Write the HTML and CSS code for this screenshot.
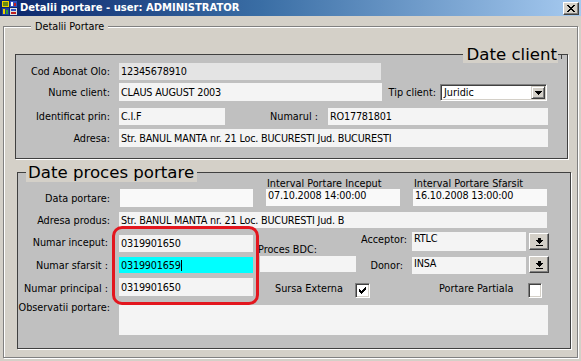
FILE: index.html
```html
<!DOCTYPE html>
<html>
<head>
<meta charset="utf-8">
<title>Detalii portare</title>
<link rel="stylesheet" href="styles.css">
</head>
<body>
<div class="titlebar">
  <svg class="appicon" width="15" height="14" viewBox="0 0 15 14" shape-rendering="crispEdges">
    <rect x="0" y="0" width="7" height="6" fill="#f0d000"/>
    <rect x="1" y="1" width="5" height="4" fill="#6a8a10"/>
    <rect x="8" y="0" width="7" height="6" fill="#3050c0"/>
    <rect x="9" y="1" width="2" height="4" fill="#ffffff"/>
    <rect x="12" y="2" width="2" height="3" fill="#c02020"/>
    <rect x="0" y="7" width="7" height="7" fill="#2040a0"/>
    <rect x="1" y="8" width="2" height="5" fill="#f0d000"/>
    <rect x="4" y="9" width="2" height="4" fill="#30a030"/>
    <rect x="8" y="7" width="7" height="7" fill="#e0e0e0"/>
    <rect x="9" y="8" width="5" height="2" fill="#3050c0"/>
    <rect x="9" y="11" width="5" height="2" fill="#c02020"/>
  </svg>
  <span class="title">Detalii portare - user: ADMINISTRATOR</span>
  <div class="closebtn">
    <svg width="8" height="7" viewBox="0 0 8 7" shape-rendering="crispEdges"><path d="M0 0h2v1H0z M6 0h2v1H6z M1 1h2v1H1z M5 1h2v1H5z M2 2h4v1H2z M3 3h2v1H3z M2 4h4v1H2z M1 5h2v1H1z M5 5h2v1H5z M0 6h2v1H0z M6 6h2v1H6z" fill="#000"/></svg>
  </div>
</div>

<div class="frame">
  <div class="frame-legend">Detalii Portare</div>

  <section class="panel panel-client">
    <div class="head-right">
      <div class="heading">Date client</div>
      <span class="tick"></span>
    </div>

    <div class="row">
      <div class="lbl c-lbl">Cod Abonat Olo:</div>
      <div class="fld fld-dis w262 h17">12345678910</div>
    </div>
    <div class="row mt3">
      <div class="lbl c-lbl">Nume client:</div>
      <div class="fld w263 h18">CLAUS AUGUST 2003</div>
      <div class="lbl tip-lbl">Tip client:</div>
      <div class="select">
        <span class="select-val">Juridic</span>
        <span class="select-btn">
          <svg width="7" height="4" viewBox="0 0 7 4" shape-rendering="crispEdges"><path d="M0 0h7v1H0z M1 1h5v1H1z M2 2h3v1H2z M3 3h1v1H3z" fill="#000"/></svg>
        </span>
      </div>
    </div>
    <div class="row mt7">
      <div class="lbl c-lbl">Identificat prin:</div>
      <div class="fld w106 h17">C.I.F</div>
      <div class="lbl nr-lbl">Numarul :</div>
      <div class="fld w220 h17">RO17781801</div>
    </div>
    <div class="row mt4">
      <div class="lbl c-lbl">Adresa:</div>
      <div class="fld w429 h18">Str. BANUL MANTA nr. 21 Loc. BUCURESTI Jud. BUCURESTI</div>
    </div>
  </section>

  <section class="panel panel-proc">
    <div class="heading heading-left">Date proces portare</div>

    <div class="rowA">
      <div class="row mt11">
        <div class="lbl p-lbl mr10">Data portare:</div>
        <div class="fld fld-white w133 h18"></div>
      </div>
      <div class="iv">
        <div class="iv-lbl">Interval Portare Inceput</div>
        <div class="fld fld-white fld-top h17">07.10.2008 14:00:00</div>
      </div>
      <div class="iv">
        <div class="iv-lbl">Interval Portare Sfarsit</div>
        <div class="fld fld-white fld-top h17">16.10.2008 13:00:00</div>
      </div>
    </div>

    <div class="row mt5">
      <div class="lbl p-lbl mr9">Adresa produs:</div>
      <div class="fld w428 h16">Str. BANUL MANTA nr. 21 Loc. BUCURESTI Jud. B</div>
    </div>

    <div class="gridC">
      <div class="lbl n-lbl">Numar inceput:</div>
      <div class="fld h17 mt3">0319901650</div>
      <div class="bdc-lbl">Proces BDC:</div>
      <div class="side">
        <div class="lbl side-lbl">Acceptor:</div>
        <div class="fld fld-top w114 h19">RTLC</div>
        <div class="btn btn-a"><svg width="7" height="8" viewBox="0 0 7 8" shape-rendering="crispEdges"><path d="M2 0h3v2H2z M0 2h7v1H0z M1 3h5v1H1z M2 4h3v1H2z M3 5h1v1H3z M0 7h7v1H0z" fill="#000"/></svg></div>
      </div>

      <div class="lbl n-lbl">Numar sfarsit :</div>
      <div class="fld fld-cyan h16 mt1"><span class="caret">0319901659</span></div>
      <div class="fld bdc-fld h16"></div>
      <div class="side">
        <div class="lbl side-lbl donor">Donor:</div>
        <div class="fld fld-top w114 h17 mt1">INSA</div>
        <div class="btn btn-d"><svg width="7" height="8" viewBox="0 0 7 8" shape-rendering="crispEdges"><path d="M2 0h3v2H2z M0 2h7v1H0z M1 3h5v1H1z M2 4h3v1H2z M3 5h1v1H3z M0 7h7v1H0z" fill="#000"/></svg></div>
      </div>

      <div class="lbl n-lbl">Numar principal :</div>
      <div class="fld h18">0319901650</div>
      <div class="checks">
        <span class="chk-lbl sursa">Sursa Externa</span>
        <span class="chk"><svg width="7" height="7" viewBox="0 0 7 7" shape-rendering="crispEdges"><path d="M6 0h1v1H6z M5 1h2v1H5z M0 2h1v1H0z M4 2h3v1H4z M0 3h2v1H0z M3 3h3v1H3z M0 4h5v1H0z M1 5h3v1H1z M2 6h1v1H2z" fill="#000"/></svg></span>
        <span class="chk-lbl partiala">Portare Partiala</span>
        <span class="chk chk-small"></span>
      </div>
    </div>

    <div class="row mt7">
      <div class="lbl p-lbl mr9 lbl-top">Observatii portare:</div>
      <div class="fld w429 h30"></div>
    </div>

    <div class="highlight"></div>
  </section>
</div>
</body>
</html>
```

FILE: styles.css
```css
* { box-sizing: border-box; }
html, body { margin: 0; padding: 0; }
body {
  width: 581px;
  height: 361px;
  overflow: hidden;
  background: #d4d0c8;
  font-family: "DejaVu Sans", Verdana, sans-serif;
  font-size: 9.7px;
  color: #000;
}

/* Title bar */
.titlebar {
  height: 16px;
  display: flex;
  align-items: flex-start;
  background: linear-gradient(to right, #0a246a 0%, #3a6ea5 45%, #a6caf0 100%);
}
.appicon { flex: none; margin: 1px 0 0 2px; }
.title {
  margin: 2px 0 0 3px;
  color: #fff;
  font-weight: bold;
  font-size: 10px;
  line-height: 12px;
  white-space: nowrap;
}
.closebtn {
  margin: 2px 2px 0 auto;
  width: 16px;
  height: 13px;
  display: flex;
  align-items: center;
  justify-content: center;
  background: #d4d0c8;
  border-top: 1px solid #fff;
  border-left: 1px solid #fff;
  border-right: 1px solid #404040;
  border-bottom: 1px solid #404040;
  box-shadow: inset -1px -1px 0 #808080;
}

/* Outer group box */
.frame {
  margin: 10px 0 0 3px;
  width: 575px;
  height: 332px;
  border: 1px solid #808080;
  box-shadow: inset 1px 1px 0 #fff, 1px 1px 0 #fff;
}
.frame-legend {
  width: fit-content;
  height: 12px;
  margin: -6px 0 0 27px;
  padding: 0 4px;
  line-height: 12px;
  background: #d4d0c8;
  white-space: nowrap;
}

/* Panels */
.panel {
  background: #c0c0c0;
  border: 1px solid #404040;
  box-shadow: 1px 1px 0 #fff;
}
.panel-client {
  margin: 21px 0 0 11px;
  width: 553px;
  height: 105px;
}
.panel-proc {
  position: relative;
  margin: 13px 0 0 13px;
  width: 554px;
  height: 177px;
}
.heading {
  background: #d4d0c8;
  font-size: 16.6px;
  white-space: nowrap;
  color: #000;
}
.head-right {
  display: flex;
  justify-content: flex-end;
  align-items: flex-start;
  height: 16px;
  margin-top: -8px;
  padding-right: 5px;
}
.head-right .heading {
  line-height: 16px;
  height: 16px;
  padding: 0 1px 0 3px;
}
.tick {
  width: 4px;
  height: 5px;
  margin-top: 7px;
  border-top: 1px solid #404040;
  border-right: 1px solid #404040;
}
.heading-left {
  width: fit-content;
  height: 18px;
  line-height: 18px;
  margin: -9px 0 -4px 8px;
  padding: 0 3px 0 2px;
}

/* Rows */
.row { display: flex; }
.mt1 { margin-top: 1px; }
.mt3 { margin-top: 3px; }
.mt4 { margin-top: 4px; }
.mt5 { margin-top: 5px; }
.mt7 { margin-top: 7px; }
.mt11 { margin-top: 11px; }
.mr9 { margin-right: 9px; }
.mr10 { margin-right: 10px; }

.lbl {
  flex: none;
  display: flex;
  justify-content: flex-end;
  align-items: center;
  white-space: nowrap;
}
.lbl-top { align-items: flex-start; margin-top: -3px; }
.c-lbl { width: 94px; margin-right: 9px; }
.p-lbl { width: 92px; }
.tip-lbl { width: 54px; margin-right: 4px; }
.nr-lbl { width: 103px; justify-content: flex-start; padding-left: 45px; }

/* Fields */
.fld {
  flex: none;
  display: flex;
  align-items: center;
  padding-left: 2px;
  background: #f4f4f4;
  white-space: nowrap;
  overflow: hidden;
  letter-spacing: -0.2px;
}
.fld-dis { background: #e4e4e4; }
.fld-white { background: #f9f9f9; }
.fld-top { align-items: flex-start; padding-top: 1px; }
.fld-cyan { background: #00ffff; }
.caret { border-right: 1px solid #000; line-height: 11px; }
.w106 { width: 106px; }
.w114 { width: 114px; }
.w133 { width: 133px; }
.w220 { width: 220px; }
.w262 { width: 262px; }
.w263 { width: 263px; }
.w428 { width: 428px; }
.w429 { width: 429px; }
.h16 { height: 16px; }
.h17 { height: 17px; }
.h18 { height: 18px; }
.h19 { height: 19px; }
.h30 { height: 30px; }

/* Combo box */
.select {
  flex: none;
  width: 107px;
  height: 17px;
  margin-top: 1px;
  display: flex;
  align-items: center;
  background: #fff;
  border-top: 1px solid #808080;
  border-left: 1px solid #808080;
  border-right: 1px solid #fff;
  border-bottom: 1px solid #fff;
  box-shadow: inset 1px 1px 0 #404040, inset -1px -1px 0 #d4d0c8;
  padding: 1px 1px 1px 3px;
}
.select-val { flex: 1; }
.select-btn {
  width: 14px;
  height: 13px;
  display: flex;
  align-items: center;
  justify-content: center;
  background: #d4d0c8;
  border-top: 1px solid #d4d0c8;
  border-left: 1px solid #d4d0c8;
  border-right: 1px solid #404040;
  border-bottom: 1px solid #404040;
  box-shadow: inset 1px 1px 0 #fff, inset -1px -1px 0 #808080;
}

/* Proces panel */
.rowA { display: flex; align-items: flex-start; }
.iv { width: 134px; margin-left: 13px; }
.iv-lbl { height: 11px; line-height: 11px; white-space: nowrap; padding-left: 1px; }

.gridC {
  display: grid;
  grid-template-columns: 101px 134px 107px 190px;
  grid-template-rows: 20px 18px 20px;
  row-gap: 4px;
  margin-top: 4px;
  align-items: start;
}
.n-lbl { padding-right: 11px; height: 100%; }
.bdc-lbl {
  align-self: end;
  margin: 0 0 -3px 5px;
  line-height: 11px;
  white-space: nowrap;
}
.bdc-fld { margin-left: 7px; width: 96px; }
.side { display: flex; align-items: flex-start; height: 100%; }
.side-lbl { width: 47px; height: 14px; margin-right: 5px; }
.donor { padding-right: 4px; margin-top: 2px; }
.btn {
  flex: none;
  width: 20px;
  height: 17px;
  margin-left: 3px;
  display: flex;
  align-items: center;
  justify-content: center;
  background: #d4d0c8;
  border-top: 1px solid #fff;
  border-left: 1px solid #fff;
  border-right: 1px solid #404040;
  border-bottom: 1px solid #404040;
  box-shadow: inset -1px -1px 0 #808080;
}
.btn-a { margin-top: 1px; }

.checks {
  grid-column: 3 / 5;
  display: flex;
  align-items: center;
  height: 100%;
}
.chk-lbl { white-space: nowrap; }
.sursa { margin-left: 22px; width: 80px; }
.partiala { margin-left: 69px; width: 89px; }
.chk {
  flex: none;
  width: 15px;
  height: 15px;
  margin-top: 4px;
  display: flex;
  align-items: center;
  justify-content: center;
  background: #fff;
  border-top: 1px solid #808080;
  border-left: 1px solid #808080;
  border-right: 1px solid #fff;
  border-bottom: 1px solid #fff;
  box-shadow: inset 1px 1px 0 #404040, inset -1px -1px 0 #d4d0c8;
}
.chk-small { width: 14px; }

/* Red highlight over the number fields */
.highlight {
  position: absolute;
  left: 94px;
  top: 53px;
  width: 147px;
  height: 79px;
  border: 3px solid #e3161e;
  border-radius: 10px;
  pointer-events: none;
}
```
